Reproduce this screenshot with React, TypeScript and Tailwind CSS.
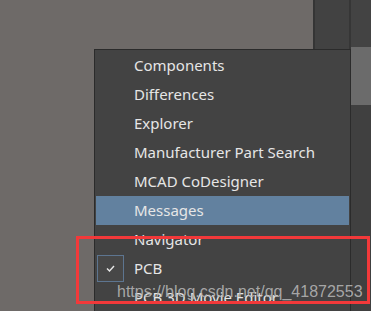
import React from "react";

const items = [
  "Components",
  "Differences",
  "Explorer",
  "Manufacturer Part Search",
  "MCAD CoDesigner",
  "Messages",
  "Navigator",
  "PCB",
  "PCB 3D Movie Editor",
];

export default function App() {
  return (
    <div className="relative w-[371px] h-[311px] overflow-hidden flex bg-[#6e6a68]" style={{ fontFamily: "'Noto Sans', sans-serif" }}>
      <div className="flex-1" />
      <div className="w-[2px] bg-[#353535]" />
      <div className="w-[34px] bg-[#424242]" />
      <div className="w-[2px] bg-[#363636]" />
      <div className="w-[20px] flex flex-col bg-[#434343]">
        <div className="h-[47px]" />
        <div className="h-[58px] bg-[#6b6b6b]" />
        <div className="flex-1 bg-[#404040]" />
      </div>

      <div className="absolute left-[94px] top-[49px] w-[257px] h-[280px] bg-[#434343] border border-[#2b2b2b] pt-[1px]">
        {items.map((t) => {
          const active = t === "Messages";
          const checked = t === "PCB";
          return (
            <div
              key={t}
              className={`relative h-[29px] mx-[1px] flex items-center pl-[38px] text-[15px] text-[#e6e6e6] ${active ? "bg-[#62819f]" : ""}`}
            >
              {checked && (
                <div className="absolute left-[1px] top-[1px] w-[27px] h-[27px] border border-[#5d7590] bg-[#474747] flex items-center justify-center">
                  <svg width="9" height="7" viewBox="0 0 9 7">
                    <path d="M1 3.5 L3.5 6 L8 1" fill="none" stroke="#e8e8e8" strokeWidth="1.4" />
                  </svg>
                </div>
              )}
              <span className="leading-none">{t}</span>
            </div>
          );
        })}
      </div>

      <div className="absolute left-[76px] top-[236px] w-[294px] h-[68px] border-[3px] border-[#f2393a]" />
      <div
        className="absolute left-[117px] top-[284px] text-[16px] leading-none text-[#b4b4b4]/90 whitespace-nowrap"
        style={{ fontFamily: "'Liberation Sans', Arial, sans-serif" }}
      >
        https://blog.csdn.net/qq_41872553
      </div>
    </div>
  );
}
